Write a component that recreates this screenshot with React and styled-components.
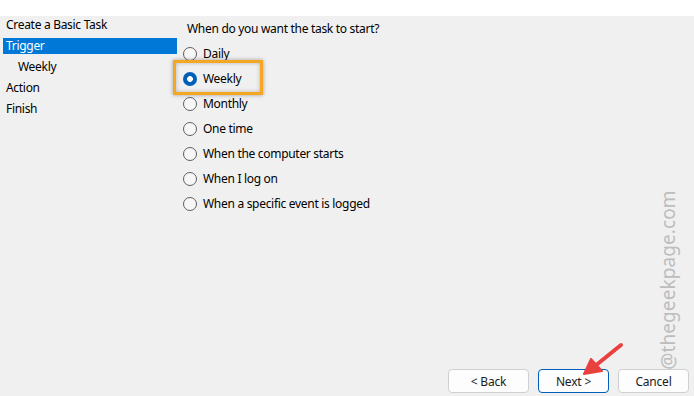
import styled, { createGlobalStyle } from 'styled-components';

const GlobalStyle = createGlobalStyle`
	html, body {
		margin: 0;
		padding: 0;
		background: #f0f0f0;
	}
	* {
		box-sizing: border-box;
	}
`;

const steps = [
	{ label: 'Create a Basic Task' },
	{ label: 'Trigger', active: true },
	{ label: 'Weekly', sub: true },
	{ label: 'Action' },
	{ label: 'Finish' },
];

const options = ['Daily', 'Weekly', 'Monthly', 'One time', 'When the computer starts', 'When I log on', 'When a specific event is logged'];

export default function App() {
	return (
		<>
			<GlobalStyle />
			<Window>
				<TopBar />
				<Body>
					<Sidebar>
						{steps.map((s) => (
							<Step key={s.label} $active={s.active} $sub={s.sub}>
								{s.label}
							</Step>
						))}
					</Sidebar>
					<Main>
						<Question>When do you want the task to start?</Question>
						<Options>
							{options.map((o) => (
								<Option key={o}>
									<Radio $checked={o === 'Weekly'} />
									{o}
									{o === 'Weekly' && <Highlight />}
								</Option>
							))}
						</Options>
						<Footer>
							<Button $wide>&lt; Back</Button>
							<Button $primary>Next &gt;</Button>
							<Button>Cancel</Button>
						</Footer>
					</Main>
				</Body>
				<Arrow width="44" height="38" viewBox="0 0 44 38">
					<path d="M40 4 L14 25" stroke="#e8413e" strokeWidth="4" strokeLinecap="round" />
					<path d="M3 33 L10 18 L21 30 Z" fill="#e8413e" stroke="#e8413e" strokeWidth="2" strokeLinejoin="round" />
				</Arrow>
				<Watermark>@thegeekpage.com</Watermark>
			</Window>
		</>
	);
}

const Window = styled.div`
	position: relative;
	width: 694px;
	height: 396px;
	display: flex;
	flex-direction: column;
	background: #f0f0f0;
	font-family: 'Noto Sans', 'Open Sans', sans-serif;
	font-size: 12px;
	letter-spacing: -0.3px;
	color: #000;
	overflow: hidden;
`;

const TopBar = styled.div`
	height: 16px;
	background: #ffffff;
	flex-shrink: 0;
`;

const Body = styled.div`
	flex: 1;
	display: flex;
`;

const Sidebar = styled.div`
	width: 177px;
	padding: 1px 0 0 3px;
	display: flex;
	flex-direction: column;
	gap: 5px;
`;

const Step = styled.div`
	height: 16px;
	line-height: 16px;
	padding-left: ${(p) => (p.$sub ? '15px' : '3px')};
	background: ${(p) => (p.$active ? '#0078d7' : 'transparent')};
	color: ${(p) => (p.$active ? '#ffffff' : '#000000')};
	white-space: nowrap;
`;

const Main = styled.div`
	flex: 1;
	display: flex;
	flex-direction: column;
	padding: 5px 0 3px 0;
`;

const Question = styled.div`
	height: 16px;
	line-height: 16px;
	padding-left: 10px;
`;

const Options = styled.div`
	display: flex;
	flex-direction: column;
	gap: 9px;
	margin-top: 9px;
`;

const Option = styled.div`
	position: relative;
	height: 16px;
	display: flex;
	align-items: center;
	gap: 6px;
	padding-left: 6px;
	line-height: 16px;
`;

const Radio = styled.span`
	width: 14px;
	height: 14px;
	border-radius: 50%;
	flex-shrink: 0;
	border: ${(p) => (p.$checked ? 'none' : '1px solid #5f5f5f')};
	background: ${(p) => (p.$checked ? 'radial-gradient(circle, #ffffff 0 2.6px, #005fb8 3.2px)' : '#f7f7f7')};
`;

const Highlight = styled.span`
	position: absolute;
	left: -4px;
	top: -11px;
	width: 90px;
	height: 35px;
	border: 3px solid #f5a623;
	box-shadow: 0 0 4px rgba(0, 0, 0, 0.35), inset 0 0 4px rgba(0, 0, 0, 0.25);
	pointer-events: none;
`;

const Footer = styled.div`
	margin-top: auto;
	display: flex;
	justify-content: flex-end;
	gap: 9px;
	padding-right: 5px;
`;

const Button = styled.button`
	width: ${(p) => (p.$wide ? '81px' : '71px')};
	height: 24px;
	background: #fdfdfd;
	border: 1px solid ${(p) => (p.$primary ? '#005fb8' : '#d0d0d0')};
	border-radius: 4px;
	font-family: 'Noto Sans', 'Open Sans', sans-serif;
	font-size: 12px;
	letter-spacing: -0.2px;
	color: #1b1b1b;
	padding: 0;
`;

const Arrow = styled.svg`
	position: absolute;
	left: 581px;
	top: 341px;
`;

const Watermark = styled.div`
	position: absolute;
	left: 668px;
	top: 280px;
	transform: translate(-50%, -50%) rotate(-90deg);
	font-family: 'Noto Sans', 'Open Sans', sans-serif;
	font-size: 19px;
	color: #bdbdbd;
	white-space: nowrap;
	letter-spacing: 0.1px;
`;
